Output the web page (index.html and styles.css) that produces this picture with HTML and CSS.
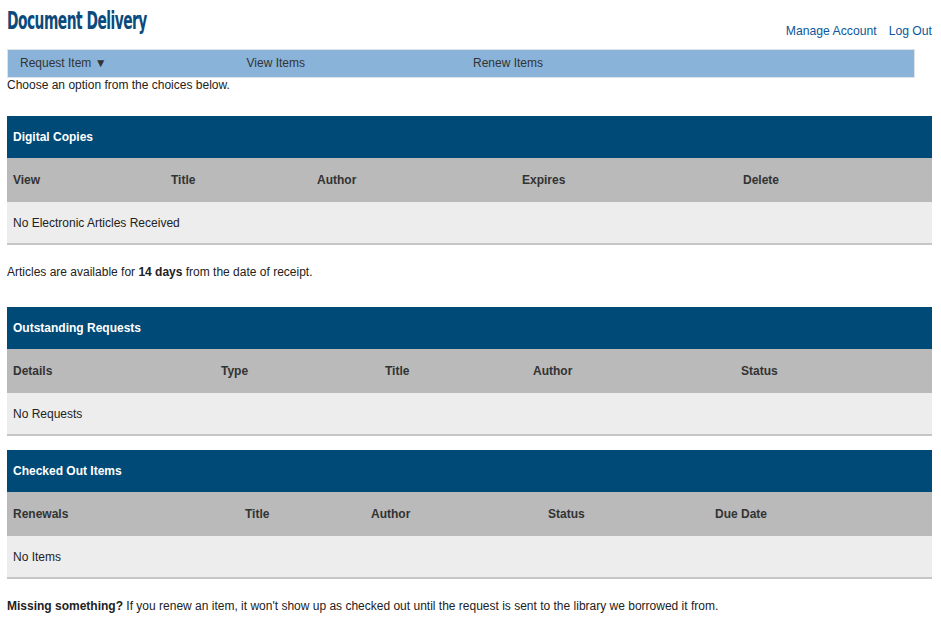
FILE: index.html
```html
<!DOCTYPE html>
<html>
<head>
<meta charset="utf-8">
<title>Document Delivery</title>
<link rel="stylesheet" href="styles.css">
</head>
<body>
<header class="top">
  <h1 class="title">Document Delivery</h1>
  <nav class="account">
    <a href="#">Manage Account</a>
    <a href="#">Log Out</a>
  </nav>
</header>
<nav class="menu">
  <a href="#" class="menu-item">Request Item ▼</a>
  <a href="#" class="menu-item">View Items</a>
  <a href="#" class="menu-item">Renew Items</a>
  <span class="menu-item"></span>
</nav>
<p class="intro">Choose an option from the choices below.</p>

<section class="panel">
  <h2 class="panel-title">Digital Copies</h2>
  <table class="grid">
    <colgroup><col style="width:158px"><col style="width:146px"><col style="width:205px"><col style="width:221px"><col></colgroup>
    <thead><tr><th>View</th><th>Title</th><th>Author</th><th>Expires</th><th>Delete</th></tr></thead>
    <tbody><tr><td colspan="5">No Electronic Articles Received</td></tr></tbody>
  </table>
</section>
<p class="note">Articles are available for <b>14 days</b> from the date of receipt.</p>

<section class="panel panel-b">
  <h2 class="panel-title">Outstanding Requests</h2>
  <table class="grid">
    <colgroup><col style="width:208px"><col style="width:164px"><col style="width:148px"><col style="width:208px"><col></colgroup>
    <thead><tr><th>Details</th><th>Type</th><th>Title</th><th>Author</th><th>Status</th></tr></thead>
    <tbody><tr><td colspan="5">No Requests</td></tr></tbody>
  </table>
</section>

<section class="panel panel-c">
  <h2 class="panel-title">Checked Out Items</h2>
  <table class="grid">
    <colgroup><col style="width:232px"><col style="width:126px"><col style="width:177px"><col style="width:167px"><col></colgroup>
    <thead><tr><th>Renewals</th><th>Title</th><th>Author</th><th>Status</th><th>Due Date</th></tr></thead>
    <tbody><tr><td colspan="5">No Items</td></tr></tbody>
  </table>
</section>
<p class="footer-note"><b>Missing something?</b> If you renew an item, it won't show up as checked out until the request is sent to the library we borrowed it from.</p>
</body>
</html>
```
FILE: styles.css
```css
html, body {
  margin: 0;
  padding: 0;
  background: #fff;
}
body {
  padding: 0 9px 0 7px;
  font-family: "Liberation Sans", Arial, Helvetica, sans-serif;
  font-size: 12px;
  color: #222;
}
.top {
  display: flex;
  justify-content: space-between;
  align-items: flex-start;
  height: 49px;
}
.title {
  margin: 7px 0 0 0;
  font-family: "DejaVu Sans Condensed", "Liberation Sans", sans-serif;
  font-stretch: condensed;
  font-weight: bold;
  font-size: 24px;
  line-height: 28px;
  color: #0b4a7b;
  letter-spacing: -0.8px;
  white-space: nowrap;
  transform: scaleX(0.64);
  transform-origin: left center;
}
.account {
  margin-top: 23px;
  display: flex;
  gap: 12px;
  margin-right: -9px;
  padding-right: 9px;
}
.account a {
  color: #0b579b;
  text-decoration: none;
  font-size: 12.2px;
  line-height: 16px;
}
.menu {
  display: flex;
  width: 906px;
  height: 27px;
  background: #89b3d9;
  border: 1px solid #dfe3e8;
}
.menu-item {
  flex: 1;
  padding-left: 12px;
  color: #333;
  text-decoration: none;
  line-height: 27px;
  font-size: 12px;
}
.intro {
  margin: 0;
  line-height: 15px;
}
.panel {
  margin-top: 23px;
}
.panel-b { margin-top: 27px; }
.panel-c { margin-top: 14px; }
.panel-title {
  margin: 0;
  height: 42px;
  line-height: 42px;
  background: #004a77;
  color: #fff;
  font-size: 12px;
  font-weight: bold;
  padding-left: 6px;
}
.grid {
  width: 100%;
  border-collapse: collapse;
  table-layout: fixed;
}
.grid th {
  background: #bababa;
  color: #333;
  text-align: left;
  font-weight: bold;
  font-size: 12px;
  height: 44px;
  padding: 0 0 0 6px;
}
.grid td {
  background: #ededed;
  height: 41px;
  padding: 0 0 0 6px;
  border-bottom: 2px solid #c6c6c6;
  color: #222;
}
.note {
  margin: 20px 0 0 0;
  line-height: 15px;
}
.footer-note {
  margin: 20px 0 0 0;
  line-height: 15px;
}
```
